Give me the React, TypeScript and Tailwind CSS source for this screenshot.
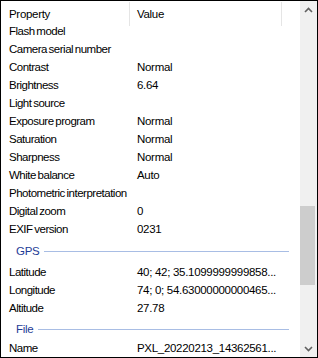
import React from "react";

type Row = { label: string; value?: string };

const mainRows: Row[] = [
  { label: "Flash model" },
  { label: "Camera serial number" },
  { label: "Contrast", value: "Normal" },
  { label: "Brightness", value: "6.64" },
  { label: "Light source" },
  { label: "Exposure program", value: "Normal" },
  { label: "Saturation", value: "Normal" },
  { label: "Sharpness", value: "Normal" },
  { label: "White balance", value: "Auto" },
  { label: "Photometric interpretation" },
  { label: "Digital zoom", value: "0" },
  { label: "EXIF version", value: "0231" },
];

const gpsRows: Row[] = [
  { label: "Latitude", value: "40; 42; 35.1099999999858..." },
  { label: "Longitude", value: "74; 0; 54.63000000000465..." },
  { label: "Altitude", value: "27.78" },
];

const fileRows: Row[] = [{ label: "Name", value: "PXL_20220213_14362561..." }];

function DataRow({ row }: { row: Row }) {
  return (
    <div className="flex h-[18px] shrink-0 items-center leading-[18px] whitespace-nowrap">
      <div className="w-[129px] shrink-0 pl-[8px] tracking-[-0.5px] [word-spacing:-1px]">{row.label}</div>
      <div className="w-[152px] shrink-0 overflow-hidden pl-[7px]">{row.value ?? ""}</div>
    </div>
  );
}

function GroupHeader({ title, className }: { title: string; className: string }) {
  return (
    <div className={className}>
      <div className="flex h-[18px] items-center pl-[15px] pr-[11px] leading-[18px]">
        <span className="text-[#1e3c96]">{title}</span>
        <div className="ml-[5px] h-px flex-1 bg-[#a8bde4]" />
      </div>
    </div>
  );
}

export default function App() {
  return (
    <div
      className="flex h-[358px] w-[318px] overflow-hidden border border-black bg-white text-[11.5px] tracking-[-0.3px] text-black"
      style={{ fontFamily: '"Liberation Sans", Arial, sans-serif' }}
    >
      <div className="flex min-w-0 flex-1 flex-col overflow-hidden">
        <div className="relative flex h-[21px] shrink-0 leading-[18px]">
          <div className="w-[129px] shrink-0 pl-[8px] pt-[4px]">Property</div>
          <div className="w-[152px] shrink-0 pl-[7px] pt-[4px]">Value</div>
          <div className="absolute left-[128px] top-[1px] h-[24px] w-px bg-[#e5e5e5]" />
          <div className="absolute left-[280px] top-[1px] h-[24px] w-px bg-[#e5e5e5]" />
        </div>
        {mainRows.map((r) => (
          <DataRow key={r.label} row={r} />
        ))}
        <GroupHeader title="GPS" className="h-[25px] shrink-0 pt-[4px]" />
        {gpsRows.map((r) => (
          <DataRow key={r.label} row={r} />
        ))}
        <GroupHeader title="File" className="h-[22px] shrink-0 pt-[3px]" />
        {fileRows.map((r) => (
          <DataRow key={r.label} row={r} />
        ))}
      </div>
      <div className="flex w-[17px] shrink-0 flex-col bg-[#f0f0f0]">
        <div className="flex h-[17px] shrink-0 items-center justify-center pr-[1px]">
          <svg width="9" height="6" viewBox="0 0 9 6">
            <path d="M1 5 L4.5 1.5 L8 5" fill="none" stroke="#606060" strokeWidth="1.6" />
          </svg>
        </div>
        <div className="flex flex-1 flex-col">
          <div className="h-[188px] shrink-0" />
          <div className="h-[79px] w-[15px] shrink-0 bg-[#cdcdcd]" />
        </div>
        <div className="flex h-[17px] shrink-0 items-center justify-center pr-[1px]">
          <svg width="9" height="6" viewBox="0 0 9 6">
            <path d="M1 1 L4.5 4.5 L8 1" fill="none" stroke="#606060" strokeWidth="1.6" />
          </svg>
        </div>
      </div>
    </div>
  );
}
